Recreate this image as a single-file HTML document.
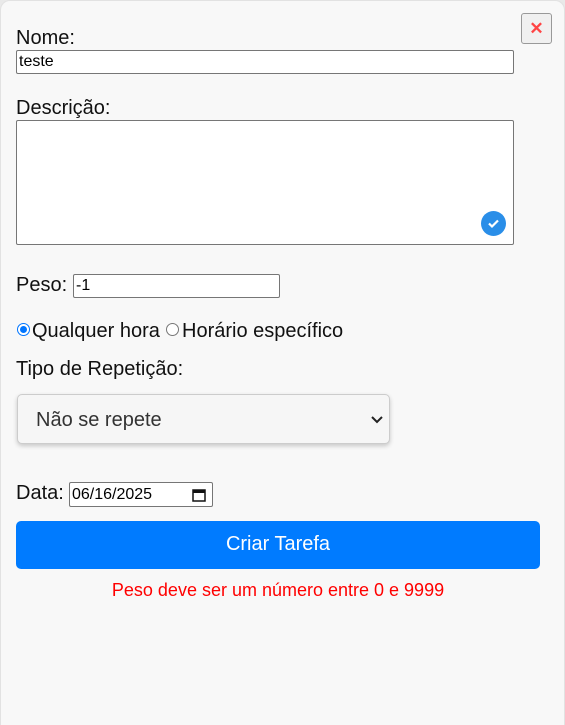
<!DOCTYPE html>
<html style="overflow:hidden;height:725px"><head><meta charset="utf-8"><style>
body{margin:0;width:565px;height:725px;background:#e9e9e9;font-family:"Liberation Sans",sans-serif;overflow:hidden;position:relative}
.card{position:absolute;left:0;top:0;width:565px;height:725px;background:#f8f8f8;border-radius:10px 10px 0 0;border:1px solid #e2e2e2;border-bottom:none;box-sizing:border-box}
.a{position:absolute}
.lbl{font-size:20px;color:#111}
.in{background:#fff;border:1px solid #767676;border-radius:2px;box-sizing:border-box;font-size:16px;color:#000;padding-left:2px}
</style></head><body>
<div class="card"></div>
<div class="a" style="left:521px;top:13px;width:31px;height:31px;border:1px solid #999;border-radius:3px;box-sizing:border-box;background:#f0f0f0;color:#f44;font-size:17px;font-weight:bold;text-align:center;line-height:29px">✕</div>
<div class="a lbl" style="left:16px;top:27px">Nome:</div>
<div class="a in" style="left:16px;top:50px;width:498px;height:24px;line-height:22px">teste</div>
<div class="a lbl" style="left:16px;top:97px">Descrição:</div>
<div class="a in" style="left:16px;top:120px;width:498px;height:125px"></div>
<div class="a" style="left:481px;top:211px;width:25px;height:25px;border-radius:50%;background:#2a8ee8">
<svg width="25" height="25"><path d="M8 12.5l3 3 6-6" stroke="#fff" stroke-width="2.2" fill="none"/></svg></div>
<div class="a lbl" style="left:16px;top:274px">Peso:</div>
<div class="a in" style="left:73px;top:274px;width:207px;height:24px;line-height:22px">-1</div>
<div class="a" style="left:17px;top:323px;width:13px;height:13px;border-radius:50%;border:1px solid #0075ff;box-sizing:border-box;background:#fff"><div style="margin:2px;width:7px;height:7px;border-radius:50%;background:#0075ff"></div></div>
<div class="a lbl" style="left:32px;top:320px">Qualquer hora</div>
<div class="a" style="left:166px;top:323px;width:13px;height:13px;border-radius:50%;border:1px solid #777;box-sizing:border-box;background:#fff"></div>
<div class="a lbl" style="left:182px;top:320px">Horário específico</div>
<div class="a lbl" style="left:16px;top:358px">Tipo de Repetição:</div>
<div class="a" style="left:17px;top:394px;width:373px;height:50px;border:1px solid #ccc;border-radius:5px;box-sizing:border-box;background:#f6f6f6;box-shadow:0 2px 5px rgba(0,0,0,.2);font-size:20px;color:#333;line-height:50px;padding-left:18px">Não se repete
<svg class="a" style="right:6px;top:21px" width="12" height="8"><path d="M1 1l5 5 5-5" stroke="#222" stroke-width="2" fill="none"/></svg></div>
<div class="a lbl" style="left:16px;top:482px">Data:</div>
<div class="a in" style="left:69px;top:482px;width:144px;height:25px;line-height:23px">06/16/2025
<svg class="a" style="right:6px;top:5px" width="14" height="14"><rect x="1" y="2" width="12" height="11" fill="none" stroke="#111" stroke-width="1.5"/><rect x="1" y="2" width="12" height="3" fill="#111"/></svg></div>
<div class="a" style="left:16px;top:521px;width:524px;height:48px;background:#007bff;border-radius:5px;color:#fff;font-size:20px;text-align:center;line-height:47px">Criar Tarefa</div>
<div class="a" style="left:0;width:556px;top:580px;text-align:center;color:#f00;font-size:18px">Peso deve ser um número entre 0 e 9999</div>
</body></html>
